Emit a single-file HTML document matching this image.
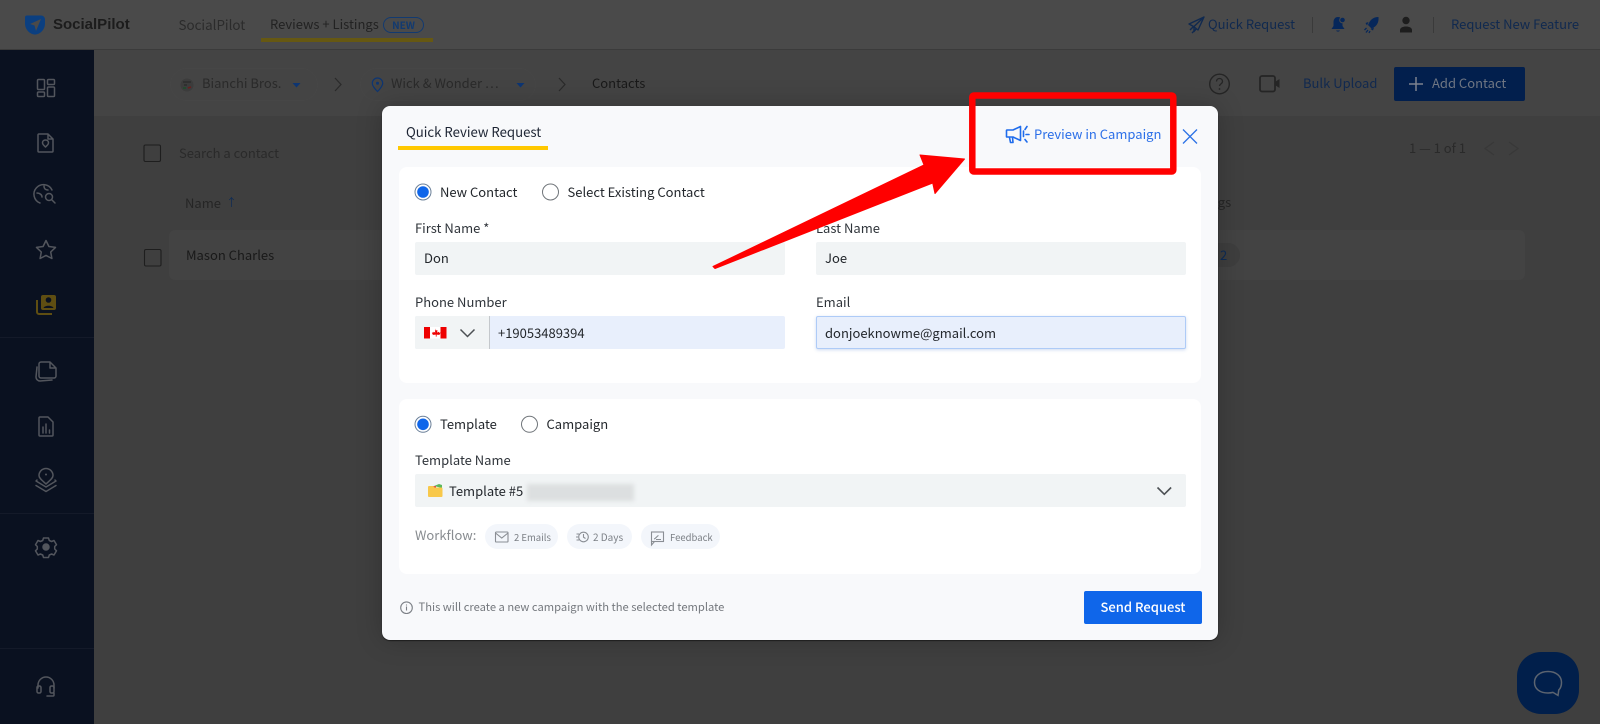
<!DOCTYPE html>
<html lang="en"><head><meta charset="utf-8"><title>Quick Review Request</title>
<style>
*{box-sizing:border-box}
html,body{margin:0;padding:0;width:1600px;height:724px;overflow:hidden;background:#3f3f3f}
body{position:relative;font-family:"Noto Sans CJK JP","Liberation Sans",sans-serif;font-size:13px}
.b{position:absolute}
.t{position:absolute;white-space:nowrap;line-height:20px;height:20px}
svg.o{position:absolute;left:0;top:0;width:1600px;height:724px;overflow:visible}
.lbl{color:#2f343a}
.val{color:#23272c}
.inp{position:absolute;height:33px;background:#f1f4f5;border-radius:2px}
</style></head><body>
<!-- page background layers -->
<div class="b" style="left:0;top:0;width:1600px;height:50px;background:#4a4a4a;border-bottom:1px solid #3b3b3b"></div>
<div class="b" style="left:94px;top:50px;width:1506px;height:66px;background:#444"></div>
<div class="b" style="left:0;top:50px;width:94px;height:674px;background:#0a1120"></div>
<div class="b" style="left:0;top:337px;width:94px;height:1px;background:#141a29"></div>
<div class="b" style="left:0;top:513px;width:94px;height:1px;background:#141a29"></div>
<div class="b" style="left:0;top:648px;width:94px;height:1px;background:#141a29"></div>
<div class="b" style="left:170px;top:68px;width:148px;height:33px;border:1px solid #464646;border-radius:17px"></div>
<div class="b" style="left:360px;top:68px;width:176px;height:33px;border:1px solid #464646;border-radius:17px"></div>
<div class="b" style="left:169px;top:230px;width:1356px;height:50px;background:#434343;border-radius:6px"></div>
<div class="b" style="left:1190px;top:243px;width:50px;height:24px;background:#3e3e3e;border-radius:12px"></div>

<!-- top nav text -->
<div class="t" style="left:53px;top:15px;font-weight:700;font-size:15px;color:#1c1c1c;font-family:'Liberation Sans',sans-serif">SocialPilot</div>
<div class="t" style="left:178.500px;top:14px;color:#2b2b2b;font-size:13.400px">SocialPilot</div>
<div class="t" style="left:270px;top:14px;color:#222">Reviews + Listings</div>
<div class="b" style="left:383px;top:17px;width:41px;height:16px;border:1px solid #123a70;border-radius:8px;color:#123a70;font-size:10px;line-height:14px;text-align:center;font-weight:700">NEW</div>
<div class="b" style="left:261px;top:38px;width:172px;height:4px;background:#665812"></div>
<div class="t" style="left:1208px;top:14px;color:#10294f">Quick Request</div>
<div class="b" style="left:1312px;top:17px;width:1px;height:16px;background:#3a3a3a"></div>
<div class="b" style="left:1433px;top:17px;width:1px;height:16px;background:#3a3a3a"></div>
<div class="t" style="left:1451px;top:14px;color:#10294f">Request New Feature</div>

<!-- sub header -->
<div class="t" style="left:202px;top:73px;color:#2a2a2a">Bianchi Bros.</div>
<div class="t" style="left:391px;top:73px;color:#2a2a2a">Wick &amp; Wonder …</div>
<div class="t" style="left:592px;top:73px;color:#191919">Contacts</div>
<div class="t" style="left:1303px;top:73px;color:#11294f">Bulk Upload</div>
<div class="b" style="left:1394px;top:67px;width:131px;height:34px;background:#021f4d;border-radius:2px"></div>
<div class="t" style="left:1432px;top:73px;color:#6f7683">Add Contact</div>

<!-- table text -->
<div class="t" style="left:179px;top:143px;color:#2a2a2a">Search a contact</div>
<div class="t" style="left:1409px;top:138px;color:#2a2a2a">1 — 1 of 1</div>
<div class="t" style="left:185px;top:193px;color:#252525">Name</div>
<div class="t" style="left:226px;top:192px;color:#0d2b55;font-size:11px">↑</div>
<div class="t" style="left:1186px;top:192px;color:#252525">Ratings</div>
<div class="t" style="left:186px;top:245px;color:#191919">Mason Charles</div>
<div class="t" style="left:1220px;top:245px;color:#0d2b55">2</div>

<!-- chat -->
<div class="b" style="left:1517px;top:652px;width:62px;height:62px;background:#011f4b;border-radius:24px"></div>

<!-- background icons -->
<svg class="o" viewBox="0 0 1600 724" fill="none">
 <path d="M27 15.500h14a4 4 0 0 1 4 4v4c0 6-5 11-10 11s-10-5-10-11v-6a2 2 0 0 1 2-2z" fill="#0b3f80"/>
 <path d="M30 24l11-5-5 12-1.500-5.500z" fill="#4a4a4a"/>
 <g stroke="#53565d" stroke-width="1.500" stroke-linejoin="round" stroke-linecap="round">
  <rect x="37.500" y="79.500" width="7" height="10" rx="1"/><rect x="47.500" y="79.500" width="7" height="5" rx="1"/><rect x="37.500" y="92" width="7" height="4.500" rx="1"/><rect x="47.500" y="87" width="7" height="9.500" rx="1"/>
  <path d="M39 134h9l5 5v12a1 1 0 0 1-1 1H39a1 1 0 0 1-1-1v-16a1 1 0 0 1 1-1zM48 134v5h5"/>
  <path d="M45.500 140c-2 0-3 1.500-3 2.800 0 1.700 3 4.200 3 4.200s3-2.500 3-4.200c0-1.300-1-2.800-3-2.800z"/>
  <path d="M52 190a9.500 9.500 0 1 0-12 13M37 193c3 0 5 2 5 4M44 186c0 3 2 4 4 4"/><circle cx="49" cy="197" r="3.500"/><path d="M52 200l3 3"/>
  <path d="M46 240.500l2.900 6 6.600.9-4.800 4.600 1.200 6.500-5.900-3.100-5.900 3.100 1.200-6.500-4.800-4.600 6.600-.9z"/>
  <path d="M41 362h9l6 6v8a2 2 0 0 1-2 2H41a2 2 0 0 1-2-2v-12a2 2 0 0 1 2-2zM50 362v6h6M37 367l-1 10a4 4 0 0 0 4 4l12-1"/>
  <path d="M40 417h8l5 5v13a1 1 0 0 1-1 1H40a1 1 0 0 1-1-1v-17a1 1 0 0 1 1-1zM43 433v-6M46 433v-9M49.500 433v-3"/>
  <path d="M46 468.500a7 7 0 0 0-7 7c0 3 4 5.500 7 8.500 3-3 7-5.500 7-8.500a7 7 0 0 0-7-7zM37 480l-1 1 10 6 10-6-1-1M36 485.500l10 6 10-6"/>
  <path d="M43.500 538h5l.8 2.500 2.300 1 2.400-1 2.500 4.200-1.800 1.800v2.500l1.800 1.800-2.500 4.200-2.400-1-2.300 1-.8 2.500h-5l-.8-2.500-2.300-1-2.400 1-2.500-4.200 1.800-1.800v-2.500l-1.800-1.800 2.500-4.200 2.400 1 2.300-1z"/><circle cx="46" cy="547" r="3" fill="#53565d"/>
  <path d="M38 688v-3a8 8 0 0 1 16 0v3"/><rect x="37" y="686" width="4" height="7" rx="1.500"/><rect x="50" y="686" width="4" height="7" rx="1.500"/><path d="M54 693v2a1 1 0 0 1-1 1h-6"/>
 </g>
 <circle cx="46" cy="474.500" r="1" fill="#53565d"/>
 <path d="M43 295h11a2 2 0 0 1 2 2v11a2 2 0 0 1-2 2H43a2 2 0 0 1-2-2v-11a2 2 0 0 1 2-2z" fill="#5f4e12"/><circle cx="48.500" cy="300" r="2.800" fill="#0a1120"/><path d="M43.500 308c1-3 9-3 10 0z" fill="#0a1120"/><path d="M37 300v12a2 2 0 0 0 2 2h13" stroke="#5f4e12" stroke-width="2"/>
 <!-- top right -->
 <path d="M1204 17l-15 7 4.500 2.500L1198 30zM1204 17l-10 9.500v5l2.500-3M1190 30l3-3M1192 33l2-2" stroke="#10294f" stroke-width="1.400" stroke-linejoin="round"/>
 <path d="M1338 17c-3 0-4.500 2.500-4.500 5v4l-2 3h13l-2-3v-4c0-2.500-1.500-5-4.500-5z" fill="#06275a"/><circle cx="1342.500" cy="20" r="2.800" fill="#06275a" stroke="#4a4a4a"/><path d="M1336 30.500a2.300 2.300 0 0 0 4 0z" fill="#06275a"/>
 <path d="M1378.500 17c-5.500 0-8.500 3-10.500 8l3.500 3.500c5-2 7.500-5.500 7-11.500z" fill="#06275a"/><path d="M1368.500 22l-3 1 1.500 2.500zM1374 27.500l-1 3-2.500-1.500z" fill="#06275a"/><path d="M1366.500 28l-2 2M1368 30l-2 2.500M1370 31l-1 2" stroke="#06275a" stroke-width="1.300"/>
 <circle cx="1406" cy="20.500" r="3.700" fill="#1d1d1d"/><path d="M1400 32.500v-2.500c0-2.300 3-3.500 6-3.500s6 1.200 6 3.500v2.500z" fill="#1d1d1d"/>
 <!-- sub header icons -->
 <circle cx="187" cy="85" r="6.500" fill="#3c3c3c"/><path d="M183 82h8M184 85h3" stroke="#2a2a2a" stroke-width="1.200"/><path d="M188 88l3-1" stroke="#6a1d1d" stroke-width="1.500"/><path d="M183 88l3 0" stroke="#1d4d2a" stroke-width="1.500"/>
 <path d="M292.500 83h8l-4 4.500z" fill="#0d3572"/><path d="M516.500 83h8l-4 4.500z" fill="#0d3572"/>
 <path d="M335 78l6 6.500-6 6.500M559 78l6 6.500-6 6.500" stroke="#2a2a2a" stroke-width="1.200"/>
 <path d="M377.500 78a5.200 5.200 0 0 0-5.200 5.200c0 3.300 5.200 8.300 5.200 8.300s5.200-5 5.200-8.300a5.200 5.200 0 0 0-5.200-5.200z" stroke="#0d3572" stroke-width="1.200"/><circle cx="377.500" cy="83.200" r="1.500" fill="#0d3572"/>
 <circle cx="1219.500" cy="84" r="9.800" stroke="#252525" stroke-width="1.400"/><path d="M1216.500 81.500c0-4 6-4 6 0 0 2.500-3 2.200-3 4.500" stroke="#252525" stroke-width="1.300"/><circle cx="1219.500" cy="89" r=".9" fill="#252525"/>
 <rect x="1260" y="76" width="15" height="15.500" rx="2" stroke="#252525" stroke-width="1.800"/><path d="M1275 82l4.500-3v9l-4.500-3z" fill="#252525"/>
 <path d="M1416 77v14M1409 84h14" stroke="#7c828e" stroke-width="1.500"/>
 <!-- table -->
 <rect x="144" y="145" width="16.500" height="16.500" rx="1.500" stroke="#1e1e1e" stroke-width="1.100"/>
 <rect x="144.500" y="249.500" width="16.500" height="16.500" rx="1.500" stroke="#1e1e1e" stroke-width="1.100"/>
 <path d="M1494 142l-9 6.500 9 6.500M1509 142l9 6.500-9 6.500" stroke="#383838" stroke-width="1.200"/>
 <!-- chat glyph -->
 <path d="M1548 671.500c-8 0-13.500 4.500-13.500 11 0 6.500 5.500 10.500 13.500 10.500 2 0 3.500-.2 5-.6l5 3 .8-5.500c2-1.800 2.700-4.500 2.700-7.400 0-6.500-5.500-11-13.500-11z" stroke="#5c6470" stroke-width="1.500"/>
</svg>

<!-- modal -->
<div class="b" style="left:382px;top:106px;width:836px;height:534px;background:#f8f9fb;border-radius:8px;box-shadow:0 0 26px rgba(0,0,0,.22),0 1px 1px rgba(0,0,0,.5)"></div>
<div class="b" style="left:399px;top:167px;width:802px;height:216px;background:#fff;border-radius:8px"></div>
<div class="b" style="left:399px;top:399px;width:802px;height:175px;background:#fff;border-radius:8px"></div>

<div class="t" style="left:406px;top:122px;color:#1d2433;font-size:13.200px">Quick Review Request</div>
<div class="b" style="left:398px;top:146px;width:150px;height:4px;background:#ffc800"></div>
<div class="t" style="left:1034px;top:124px;color:#2b6fe8">Preview in Campaign</div>

<div class="t val" style="left:440px;top:182px">New Contact</div>
<div class="t val" style="left:567.500px;top:182px">Select Existing Contact</div>

<div class="t lbl" style="left:415px;top:218px">First Name *</div>
<div class="inp" style="left:415px;top:242px;width:370px"></div>
<div class="t val" style="left:424px;top:248px">Don</div>
<div class="t lbl" style="left:816px;top:218px">Last Name</div>
<div class="inp" style="left:816px;top:242px;width:370px"></div>
<div class="t val" style="left:825px;top:248px">Joe</div>

<div class="t lbl" style="left:415px;top:292px">Phone Number</div>
<div class="inp" style="left:415px;top:316px;width:370px;background:#e8effc"></div>
<div class="b" style="left:415px;top:316px;width:75px;height:33px;background:#f1f4f5;border-right:1px solid #c4c8cc;border-radius:2px 0 0 2px"></div>
<div class="t val" style="left:498px;top:323px">+19053489394</div>
<div class="t lbl" style="left:816px;top:292px">Email</div>
<div class="inp" style="left:816px;top:316px;width:370px;background:#e8effc;border:1px solid #aecbf7;box-shadow:0 1px 3px rgba(60,110,200,.25)"></div>
<div class="t val" style="left:825px;top:323px">donjoeknowme@gmail.com</div>

<div class="t val" style="left:440px;top:414px">Template</div>
<div class="t val" style="left:546.500px;top:414px">Campaign</div>
<div class="t lbl" style="left:415px;top:450px">Template Name</div>
<div class="inp" style="left:415px;top:474px;width:771px"></div>
<div class="t val" style="left:449px;top:481px">Template #5</div>
<div class="b" style="left:527px;top:484px;width:107px;height:17px;background:#dcdfe0;filter:blur(2px)"></div>

<div class="t" style="left:415px;top:525px;color:#888c90">Workflow:</div>
<div class="b" style="left:485px;top:524px;width:73px;height:25px;background:#f3f6fb;border-radius:13px"></div>
<div class="b" style="left:567px;top:524px;width:65px;height:25px;background:#f3f6fb;border-radius:13px"></div>
<div class="b" style="left:641px;top:524px;width:79px;height:25px;background:#f3f6fb;border-radius:13px"></div>
<div class="t" style="left:514px;top:527px;color:#7c8086;font-size:9.500px">2 Emails</div>
<div class="t" style="left:593px;top:527px;color:#7c8086;font-size:10px">2 Days</div>
<div class="t" style="left:670px;top:527px;color:#7c8086;font-size:9.500px">Feedback</div>

<div class="t" style="left:418.500px;top:597px;color:#74787d;font-size:11.200px">This will create a new campaign with the selected template</div>
<div class="b" style="left:1084px;top:591px;width:118px;height:33px;background:#0f66ea;border-radius:2px;color:#fff;text-align:center;line-height:32px;font-weight:500;font-size:13px">Send Request</div>

<svg class="o" viewBox="0 0 1600 724" fill="none">
 <circle cx="423" cy="192" r="8" stroke="#6b8099" fill="#fff"/><circle cx="423" cy="192" r="5.800" fill="#0f66ea"/>
 <circle cx="550.500" cy="192" r="8" stroke="#70757a" fill="#fff"/>
 <circle cx="423" cy="424.300" r="8" stroke="#6b8099" fill="#fff"/><circle cx="423" cy="424.300" r="5.800" fill="#0f66ea"/>
 <circle cx="529.500" cy="424.300" r="8" stroke="#70757a" fill="#fff"/>
 <!-- megaphone -->
 <g stroke="#1f6cec" stroke-width="1.600" stroke-linejoin="round" stroke-linecap="round">
  <path d="M1007 130h6l7.500-3.500v14l-7.500-3.500h-6a.5.500 0 0 1-.5-.5v-6a.5.500 0 0 1 .5-.5z"/>
  <path d="M1009.500 137.500l1 5h2.500l-.5-5M1023.500 131v5.500"/>
  <path d="M1025 129.500l2-3M1026 134.500h3M1025 139.500l2 2.500"/>
 </g>
 <path d="M1183 129.500l14 14M1197 129.500l-14 14" stroke="#2b72e6" stroke-width="1.300"/>
 <!-- flag -->
 <rect x="424" y="327" width="22.500" height="11.500" fill="#fff"/><rect x="424" y="327" width="6" height="11.500" fill="#ee0000"/><rect x="440.500" y="327" width="6" height="11.500" fill="#ee0000"/>
 <path d="M435.200 328.500l1.300 2 1-.4-.4 2.500 1.600-.9.500 1 1.300-.3-.6 2-.9.500-2.400-.3v2h-.8v-2l-2.400.3-.9-.5-.6-2 1.300.3.500-1 1.600.9-.4-2.500 1 .4z" fill="#ee0000"/>
 <path d="M460.500 329.500l7 7 7-7" stroke="#4c5054" stroke-width="1.500"/>
 <path d="M1157.500 487.500l6.800 6.800 6.800-6.800" stroke="#4c5054" stroke-width="1.600"/>
 <!-- folder -->
 <path d="M434 486l5-2 3 1v3z" fill="#5cb85c"/><path d="M430 486.500l6-.5v3z" fill="#e0483e"/>
 <path d="M429 486h4l1.500 1.500h7a1 1 0 0 1 1 1V496a1 1 0 0 1-1 1H429a1 1 0 0 1-1-1v-9a1 1 0 0 1 1-1z" fill="#f8c84a"/>
 <!-- pill icons -->
 <g stroke="#8a8e94" stroke-width="1.100">
  <rect x="495.500" y="532" width="12.500" height="10" rx=".8"/><path d="M495.500 533l6.250 5 6.250-5"/>
  <circle cx="583.500" cy="537" r="4.800"/><path d="M583.500 534v3.200l2 1.300M576.500 534h2.500M576 537h2M576.500 540h2.500"/>
  <rect x="651.500" y="532" width="12" height="9.500"/><path d="M651.500 541.500v3.500l3-3.500M654 539c2-.5 3-3 4.500-3.500M656 539.500h5"/>
 </g>
 <circle cx="406.500" cy="607.700" r="5.800" stroke="#7c8086" stroke-width="1.100"/><path d="M406.500 606.500v4M406.500 604.500v1" stroke="#7c8086" stroke-width="1.100"/>
 <!-- red annotation -->
 <rect x="972.300" y="95.500" width="201" height="76" rx="1.500" stroke="#ff0000" stroke-width="6.500"/>
 <path d="M713 266.500L924 165l-4-10 44.500 4-29.500 34.500-2.300-10.500L715 268.500z" fill="#ff0000" stroke="#ff0000" stroke-linejoin="round"/>
</svg>
</body></html>
